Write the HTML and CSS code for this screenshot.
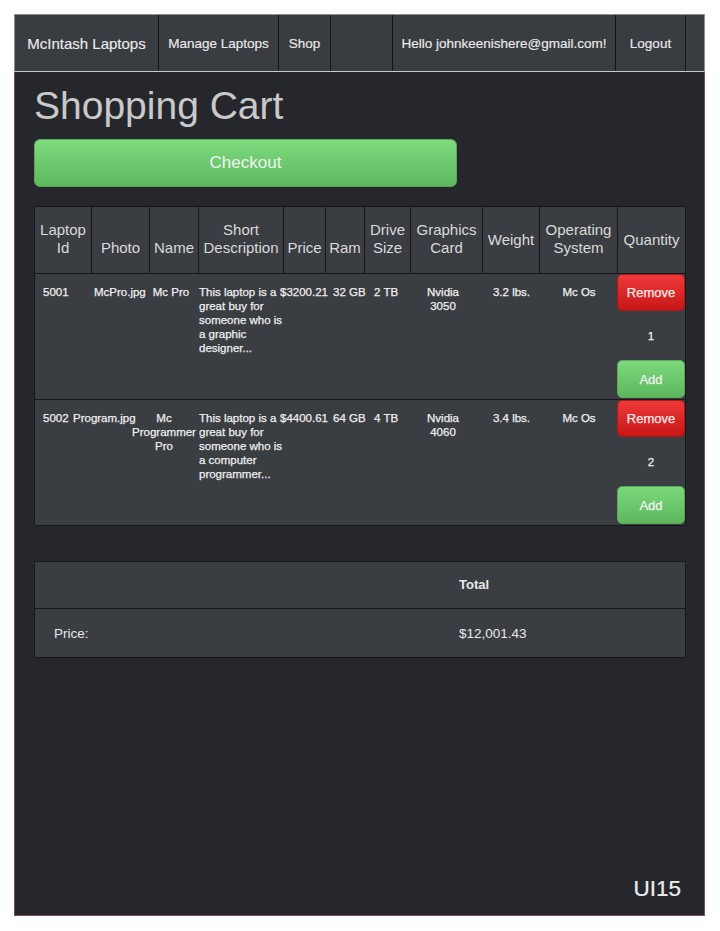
FILE: index.html
```html
<!DOCTYPE html>
<html lang="en">
<head>
<meta charset="utf-8">
<title>Shopping Cart</title>
<link rel="stylesheet" href="styles.css">
</head>
<body>
<div class="frame">
  <nav class="topnav">
    <a class="nav-item brand w-brand" href="#">McIntash Laptops</a>
    <a class="nav-item w-manage" href="#">Manage Laptops</a>
    <a class="nav-item w-shop" href="#">Shop</a>
    <span class="nav-item w-blank"></span>
    <a class="nav-item w-user" href="#">Hello johnkeenishere@gmail.com!</a>
    <a class="nav-item w-logout" href="#">Logout</a>
  </nav>
  <main class="content">
    <h1 class="page-title">Shopping Cart</h1>
    <button class="btn btn-checkout">Checkout</button>

    <div class="cart">
      <div class="cart-head">
        <div class="th">Laptop Id</div>
        <div class="th">Photo</div>
        <div class="th">Name</div>
        <div class="th">Short Description</div>
        <div class="th">Price</div>
        <div class="th">Ram</div>
        <div class="th">Drive Size</div>
        <div class="th">Graphics Card</div>
        <div class="th mid">Weight</div>
        <div class="th">Operating System</div>
        <div class="th mid last">Quantity</div>
      </div>

      <div class="cart-row row-a">
        <div class="td c-id">5001</div>
        <div class="td c-center">McPro.jpg</div>
        <div class="td c-center c-name-a">Mc Pro</div>
        <div class="td c-desc">This laptop is a great buy for someone who is a graphic designer...</div>
        <div class="td">$3200.21</div>
        <div class="td">32 GB</div>
        <div class="td">2 TB</div>
        <div class="td c-center c-gpu">Nvidia 3050</div>
        <div class="td c-center">3.2 lbs.</div>
        <div class="td c-center">Mc Os</div>
        <div class="td c-qty">
          <button class="btn btn-remove">Remove</button>
          <div class="qty">1</div>
          <button class="btn btn-add">Add</button>
        </div>
      </div>

      <div class="cart-row row-b">
        <div class="td c-id">5002</div>
        <div class="td c-center">Program.jpg</div>
        <div class="td c-center c-name-b">Mc Programmer Pro</div>
        <div class="td c-desc">This laptop is a great buy for someone who is a computer programmer...</div>
        <div class="td">$4400.61</div>
        <div class="td">64 GB</div>
        <div class="td">4 TB</div>
        <div class="td c-center c-gpu">Nvidia 4060</div>
        <div class="td c-center">3.4 lbs.</div>
        <div class="td c-center">Mc Os</div>
        <div class="td c-qty">
          <button class="btn btn-remove">Remove</button>
          <div class="qty">2</div>
          <button class="btn btn-add">Add</button>
        </div>
      </div>
    </div>

    <div class="totals">
      <div class="tot-cell tot-head"></div>
      <div class="tot-cell tot-head tot-right">Total</div>
      <div class="tot-cell tot-left">Price:</div>
      <div class="tot-cell tot-right">$12,001.43</div>
    </div>

    <div class="ui-label">UI15</div>
  </main>
</div>
</body>
</html>
```

FILE: styles.css
```css
* { box-sizing: border-box; }

body {
  margin: 0;
  background: #ffffff;
  font-family: "Liberation Sans", Arial, sans-serif;
}

.frame {
  margin: 14px 0 0 14px;
  width: 691px;
}

/* ---------- top navigation ---------- */
.topnav {
  display: flex;
  height: 58px;
  background: #393c41;
  border: 1px solid #8c8e92;
  border-bottom-color: #c8c9cb;
}

.nav-item {
  height: 56px;
  display: flex;
  align-items: center;
  justify-content: center;
  padding-top: 1px;
  border-right: 1px solid #141517;
  color: #ebebeb;
  text-decoration: none;
  font-size: 13.5px;
  white-space: nowrap;
  -webkit-text-stroke: 0.15px #ebebeb;
}

.brand { font-size: 15px; }

.w-brand  { width: 144px; }
.w-manage { width: 120px; }
.w-shop   { width: 52px; }
.w-blank  { width: 62px; }
.w-user   { width: 223px; }
.w-logout { width: 70px; }

/* ---------- content ---------- */
.content {
  height: 844px;
  background: #25272c;
  border: 1px solid #7d5157;
  border-top: 0;
  padding: 0 18px 13px 19px;
  display: flex;
  flex-direction: column;
  align-items: flex-start;
}

.page-title {
  margin: 11px 0 0 0;
  font-size: 39px;
  line-height: 45px;
  font-weight: normal;
  color: #c9c9c9;
}

.btn {
  font-family: "Liberation Sans", Arial, sans-serif;
  cursor: pointer;
  padding: 0;
}

.btn-checkout {
  margin-top: 11px;
  width: 423px;
  height: 48px;
  border: 1px solid #5aa75a;
  border-radius: 6px;
  background: linear-gradient(#7dda7d, #5eb95e);
  color: #f2f2f2;
  font-size: 17px;
}

/* ---------- cart table ---------- */
.cart {
  margin-top: 19px;
  width: 652px;
  border: 1px solid #17181b;
  background: #3a3d42;
}

.cart-head {
  display: grid;
  grid-template-columns: 57px 58px 49px 85px 42px 39px 46px 72px 57px 78px 67px;
  height: 67px;
  border-bottom: 1px solid #17181b;
}

.th {
  display: flex;
  flex-direction: column;
  justify-content: flex-end;
  align-items: center;
  text-align: center;
  padding-bottom: 16px;
  border-right: 1px solid #17181b;
  color: #dadada;
  font-size: 15px;
  line-height: 18px;
}

.th.mid {
  justify-content: center;
  padding-bottom: 0;
}

.th.last { border-right: 0; }

.cart-row {
  display: grid;
  height: 126px;
  border-bottom: 1px solid #17181b;
}

.cart-row:last-child {
  border-bottom: 0;
  height: 125px;
}

.row-a { grid-template-columns: 59px 51px 54px 81px 53px 41px 30px 78px 59px 76px 68px; }
.row-b { grid-template-columns: 38px 57px 69px 81px 53px 41px 30px 78px 59px 76px 68px; }

.td {
  padding-top: 11px;
  font-size: 11.5px;
  line-height: 14px;
  color: #f0f0f0;
  -webkit-text-stroke: 0.25px #f0f0f0;
  white-space: normal;
}

.c-id { padding-left: 8px; }
.c-center { text-align: center; }
.c-name-a { padding-right: 2px; }
.c-name-b { padding-right: 1px; }
.c-desc { width: 86px; }
.c-gpu { padding-left: 20px; padding-right: 20px; }

.c-qty {
  padding-top: 0;
  display: flex;
  flex-direction: column;
  align-items: stretch;
}

.btn-remove {
  height: 37px;
  border: 1px solid #a81818;
  border-radius: 5px;
  background: linear-gradient(#ef3a3a, #c81515);
  color: #fbeaea;
  font-size: 13px;
}

.qty {
  height: 49px;
  display: flex;
  align-items: center;
  justify-content: center;
}

.btn-add {
  height: 38px;
  border: 1px solid #5aa75a;
  border-radius: 5px;
  background: linear-gradient(#7bd87b, #5db85d);
  color: #f3f3f3;
  font-size: 13px;
}

/* ---------- totals ---------- */
.totals {
  margin-top: 35px;
  width: 652px;
  display: grid;
  grid-template-columns: 405px 1fr;
  grid-template-rows: 47px 48px;
  border: 1px solid #17181b;
  background: #3a3d42;
  color: #e9e9e9;
  font-size: 13.5px;
}

.tot-cell {
  display: flex;
  align-items: center;
}

.tot-head {
  border-bottom: 1px solid #17181b;
  font-weight: bold;
  font-size: 13px;
  padding-bottom: 1px;
}

.tot-left { padding-left: 19px; }
.tot-right { padding-left: 19px; }

.ui-label {
  margin-top: auto;
  align-self: flex-end;
  margin-right: 5px;
  font-size: 22.5px;
  line-height: 26px;
  color: #eeeeee;
  -webkit-text-stroke: 0.2px #eeeeee;
}
```
